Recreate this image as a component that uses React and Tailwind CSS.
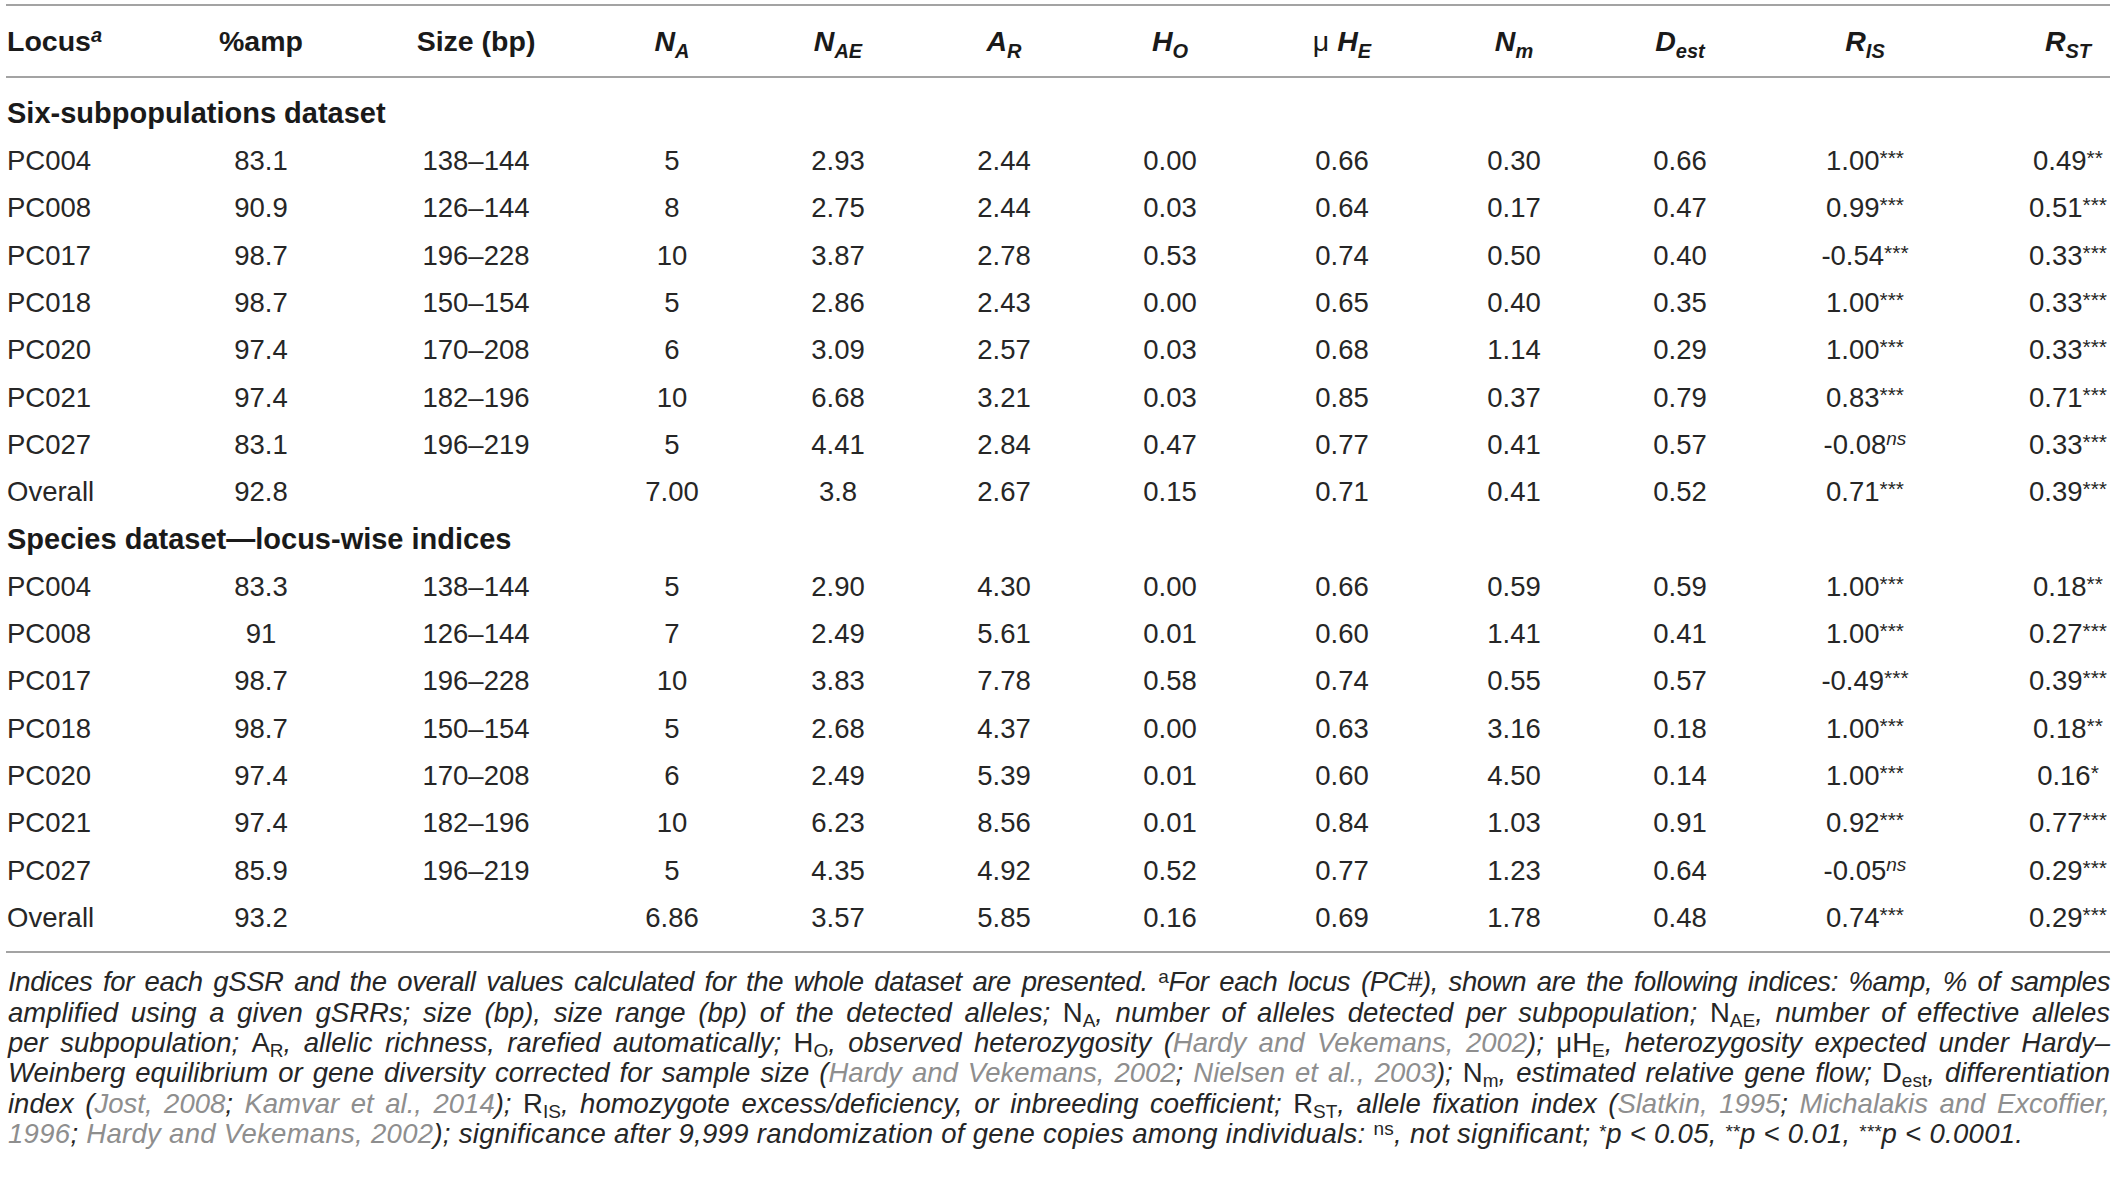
import React from "react";

const GRID =
  "grid grid-cols-[154px_202px_228px_164px_168px_164px_168px_176px_168px_164px_206px_142px]";

const sec1 = [
  ["PC004", "83.1", "138–144", "5", "2.93", "2.44", "0.00", "0.66", "0.30", "0.66", "1.00***", "0.49**"],
  ["PC008", "90.9", "126–144", "8", "2.75", "2.44", "0.03", "0.64", "0.17", "0.47", "0.99***", "0.51***"],
  ["PC017", "98.7", "196–228", "10", "3.87", "2.78", "0.53", "0.74", "0.50", "0.40", "-0.54***", "0.33***"],
  ["PC018", "98.7", "150–154", "5", "2.86", "2.43", "0.00", "0.65", "0.40", "0.35", "1.00***", "0.33***"],
  ["PC020", "97.4", "170–208", "6", "3.09", "2.57", "0.03", "0.68", "1.14", "0.29", "1.00***", "0.33***"],
  ["PC021", "97.4", "182–196", "10", "6.68", "3.21", "0.03", "0.85", "0.37", "0.79", "0.83***", "0.71***"],
  ["PC027", "83.1", "196–219", "5", "4.41", "2.84", "0.47", "0.77", "0.41", "0.57", "-0.08ns", "0.33***"],
  ["Overall", "92.8", "", "7.00", "3.8", "2.67", "0.15", "0.71", "0.41", "0.52", "0.71***", "0.39***"],
];

const sec2 = [
  ["PC004", "83.3", "138–144", "5", "2.90", "4.30", "0.00", "0.66", "0.59", "0.59", "1.00***", "0.18**"],
  ["PC008", "91", "126–144", "7", "2.49", "5.61", "0.01", "0.60", "1.41", "0.41", "1.00***", "0.27***"],
  ["PC017", "98.7", "196–228", "10", "3.83", "7.78", "0.58", "0.74", "0.55", "0.57", "-0.49***", "0.39***"],
  ["PC018", "98.7", "150–154", "5", "2.68", "4.37", "0.00", "0.63", "3.16", "0.18", "1.00***", "0.18**"],
  ["PC020", "97.4", "170–208", "6", "2.49", "5.39", "0.01", "0.60", "4.50", "0.14", "1.00***", "0.16*"],
  ["PC021", "97.4", "182–196", "10", "6.23", "8.56", "0.01", "0.84", "1.03", "0.91", "0.92***", "0.77***"],
  ["PC027", "85.9", "196–219", "5", "4.35", "4.92", "0.52", "0.77", "1.23", "0.64", "-0.05ns", "0.29***"],
  ["Overall", "93.2", "", "6.86", "3.57", "5.85", "0.16", "0.69", "1.78", "0.48", "0.74***", "0.29***"],
];

function Val({ v }) {
  const m = v.match(/^(.*?)(\*+|ns)?$/);
  const base = m[1];
  const mark = m[2];
  return (
    <span className="whitespace-nowrap">
      {base}
      {mark === "ns" ? (
        <span className="relative -top-[9px] text-[19px] italic">ns</span>
      ) : mark ? (
        <span className="relative -top-[5px] text-[21px]">{mark}</span>
      ) : null}
    </span>
  );
}

function Cell({ i, children }) {
  if (i === 0) return <div className="pl-[1px] text-left">{children}</div>;
  if (i === 11) return <div className="pl-[58px] text-center">{children}</div>;
  return <div className="text-center">{children}</div>;
}

function DataRow({ r }) {
  return (
    <div className={`${GRID} h-[47.3px] items-center leading-none`}>
      {r.map((v, i) => (
        <Cell key={i} i={i}>
          <Val v={v} />
        </Cell>
      ))}
    </div>
  );
}

function Section({ title }) {
  return (
    <div className="h-[47.3px] flex items-center pl-[1px] font-bold text-[29px] leading-none text-[#1a1a1a]">
      {title}
    </div>
  );
}

function Sym({ b, s }) {
  return (
    <span className="whitespace-nowrap">
      <i>{b}</i>
      <i className="relative top-[7px] text-[20px]">{s}</i>
    </span>
  );
}

const headers = [
  <span>
    Locus<i className="relative -top-[9px] text-[20px]">a</i>
  </span>,
  <span>%amp</span>,
  <span>Size (bp)</span>,
  <Sym b="N" s="A" />,
  <Sym b="N" s="AE" />,
  <Sym b="A" s="R" />,
  <Sym b="H" s="O" />,
  <span>
    <span className="font-normal">μ</span> <Sym b="H" s="E" />
  </span>,
  <Sym b="N" s="m" />,
  <Sym b="D" s="est" />,
  <Sym b="R" s="IS" />,
  <Sym b="R" s="ST" />,
];

function CSub({ b, s }) {
  return (
    <span className="not-italic whitespace-nowrap">
      {b}
      <span className="relative top-[5px] text-[19px]">{s}</span>
    </span>
  );
}

function Cite({ children }) {
  return <span className="text-[#8e8e8e]">{children}</span>;
}

function Star({ children }) {
  return <span className="relative -top-[5px] text-[19px]">{children}</span>;
}

const lineCls =
  "whitespace-nowrap text-justify [text-align-last:justify] h-[30.3px] leading-[30.3px]";

export default function App() {
  return (
    <div
      className="bg-white w-[2119px] h-[1189px] overflow-hidden text-[#262626]"
      style={{ fontFamily: "'Liberation Sans', Arial, sans-serif" }}
    >
      <div className="ml-[6px] w-[2104px] pt-[4px]">
        <div className="border-t-2 border-[#a3a3a3]" />
        <div className={`${GRID} h-[70px] items-center font-bold text-[28.5px] leading-none text-[#1a1a1a]`}>
          {headers.map((h, i) => (
            <Cell key={i} i={i}>
              {h}
            </Cell>
          ))}
        </div>
        <div className="border-t-2 border-[#a3a3a3]" />
        <div className="pt-[12px] text-[27.5px]">
          <Section title="Six-subpopulations dataset" />
          {sec1.map((r, i) => (
            <DataRow key={i} r={r} />
          ))}
          <Section title="Species dataset—locus-wise indices" />
          {sec2.map((r, i) => (
            <DataRow key={i} r={r} />
          ))}
        </div>
        <div className="mt-[10px] border-t-2 border-[#a3a3a3]" />
        <div className="pt-[14px] italic text-[27.5px] text-[#262626] pl-[2px]">
          <div className={`${lineCls} tracking-[-0.4px]`}>
            Indices for each gSSR and the overall values calculated for the whole dataset are presented.{" "}
            <span className="not-italic relative -top-[8px] text-[19px]">a</span>For each locus (PC#), shown are the
            following indices: %amp, % of samples
          </div>
          <div className={lineCls}>
            amplified using a given gSRRs; size (bp), size range (bp) of the detected alleles; <CSub b="N" s="A" />,
            number of alleles detected per subpopulation; <CSub b="N" s="AE" />, number of effective alleles
          </div>
          <div className={lineCls}>
            per subpopulation; <CSub b="A" s="R" />, allelic richness, rarefied automatically; <CSub b="H" s="O" />,
            observed heterozygosity (<Cite>Hardy and Vekemans, 2002</Cite>); <CSub b="μH" s="E" />, heterozygosity
            expected under Hardy–
          </div>
          <div className={lineCls}>
            Weinberg equilibrium or gene diversity corrected for sample size (<Cite>Hardy and Vekemans, 2002</Cite>;{" "}
            <Cite>Nielsen et al., 2003</Cite>); <CSub b="N" s="m" />, estimated relative gene flow;{" "}
            <CSub b="D" s="est" />, differentiation
          </div>
          <div className={lineCls}>
            index (<Cite>Jost, 2008</Cite>; <Cite>Kamvar et al., 2014</Cite>); <CSub b="R" s="IS" />, homozygote
            excess/deficiency, or inbreeding coefficient; <CSub b="R" s="ST" />, allele fixation index (
            <Cite>Slatkin, 1995</Cite>; <Cite>Michalakis and Excoffier,</Cite>
          </div>
          <div className="whitespace-nowrap h-[30.3px] leading-[30.3px] tracking-[0.3px]">
            <Cite>1996</Cite>; <Cite>Hardy and Vekemans, 2002</Cite>); significance after 9,999 randomization of gene
            copies among individuals: <span className="not-italic relative -top-[8px] text-[19px]">ns</span>, not
            significant; <Star>*</Star>p &lt; 0.05, <Star>**</Star>p &lt; 0.01, <Star>***</Star>p &lt; 0.0001.
          </div>
        </div>
      </div>
    </div>
  );
}
